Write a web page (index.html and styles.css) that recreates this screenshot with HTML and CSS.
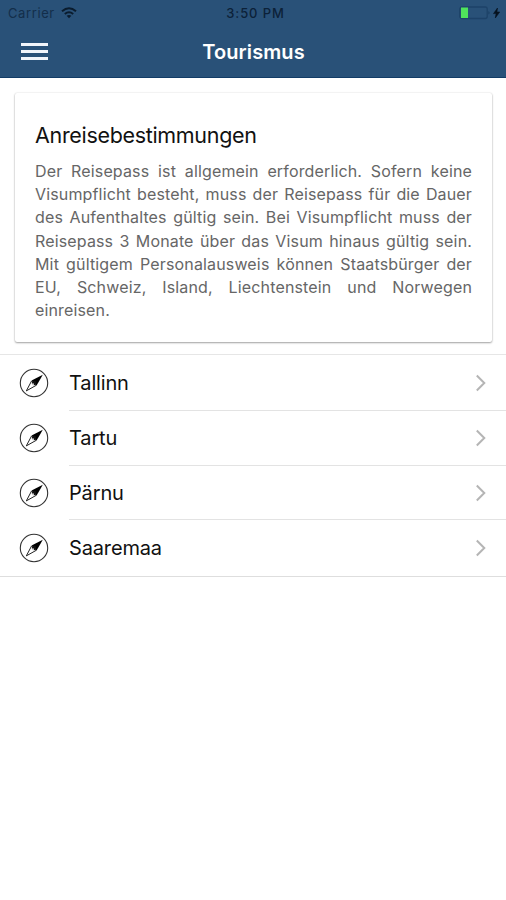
FILE: index.html
```html
<!DOCTYPE html>
<html lang="de">
<head>
<meta charset="utf-8">
<title>Tourismus</title>
<link rel="stylesheet" href="styles.css">
</head>
<body>
<svg class="defs" width="0" height="0" aria-hidden="true">
  <symbol id="compass" viewBox="0 0 30 30">
    <circle cx="15" cy="15" r="13.7" fill="none" stroke="#333" stroke-width="1.1"/>
    <path d="M23.8 6.8 17.6 17.4 12.6 12.4Z" fill="#000"/>
    <path d="M12.6 12.9 7.3 22.9 17.1 17.4Z" fill="#fff" stroke="#222" stroke-width="1"/>
    <circle cx="15" cy="15" r="2.2" fill="#111"/>
    <circle cx="14" cy="16.2" r="1" fill="#ddd"/>
  </symbol>
  <symbol id="chevron" viewBox="0 0 12 18">
    <path d="M1.8 1.5 9.3 9 1.8 16.5" fill="none" stroke="#b5b5b5" stroke-width="2"/>
  </symbol>
</svg>
<header class="header">
  <div class="status">
    <div class="carrier"><span>Carrier</span>
      <svg width="16" height="12" viewBox="0 0 16 12" fill="none" stroke="#0a1c2e" stroke-width="2"><path d="M1 4.2Q8-1.8 15 4.2M3.8 7Q8 3.5 12.2 7"/><path d="M5.6 8.8Q8 7 10.4 8.8L8 11.3Z" fill="#0a1c2e" stroke="none"/></svg>
    </div>
    <div class="time">3:50 PM</div>
    <svg class="battery" width="42" height="14" viewBox="0 0 42 14"><rect x=".8" y="1" width="27.4" height="11.5" rx="2" fill="none" stroke="#1d4268" stroke-width="1.3"/><rect x="2" y="1.5" width="7" height="10.5" fill="#4fe35c"/><path d="M29.5 5q2 1.8 0 3.6Z" fill="#173b5f"/><path d="M38.5 2 34.5 7.6h2.6L36.3 12l4.4-6h-2.8Z" fill="#06121f" stroke="#06121f" stroke-width=".6"/></svg>
  </div>
  <div class="nav">
    <div class="menu"><i></i><i></i><i></i></div>
    <h1>Tourismus</h1>
  </div>
</header>
<main>
  <section class="card">
    <h2>Anreisebestimmungen</h2>
    <p>
      <span>Der Reisepass ist allgemein erforderlich. Sofern keine</span>
      <span>Visumpflicht besteht, muss der Reisepass für die Dauer</span>
      <span>des Aufenthaltes gültig sein. Bei Visumpflicht muss der</span>
      <span>Reisepass 3 Monate über das Visum hinaus gültig sein.</span>
      <span>Mit gültigem Personalausweis können Staatsbürger der</span>
      <span>EU, Schweiz, Island, Liechtenstein und Norwegen</span>
      <span>einreisen.</span>
    </p>
  </section>
  <ul class="list">
    <li><svg class="icon"><use href="#compass"/></svg><div class="row"><span>Tallinn</span><svg class="chev"><use href="#chevron"/></svg></div></li>
    <li><svg class="icon"><use href="#compass"/></svg><div class="row"><span>Tartu</span><svg class="chev"><use href="#chevron"/></svg></div></li>
    <li><svg class="icon"><use href="#compass"/></svg><div class="row"><span>Pärnu</span><svg class="chev"><use href="#chevron"/></svg></div></li>
    <li><svg class="icon"><use href="#compass"/></svg><div class="row"><span>Saaremaa</span><svg class="chev"><use href="#chevron"/></svg></div></li>
  </ul>
</main>
</body>
</html>
```
FILE: styles.css
```css
* { box-sizing: border-box; }
body { margin: 0; min-height: 900px; background: #fff; font-family: Inter, "Liberation Sans", sans-serif; color: #111; }
svg { display: block; flex: none; }
.defs { position: absolute; }
.header { height: 78px; background: #295178; border-bottom: 1px solid #123c66; }
.status { height: 26px; padding: 0 5px 0 8px; display: grid; grid-template-columns: 1fr auto 1fr; align-items: center; font-size: 13px; color: #0c2138; }
.carrier { display: flex; align-items: center; gap: 6px; letter-spacing: .6px; color: #132e4a; }
.time { padding-left: 2px; font-weight: 500; letter-spacing: .9px; }
.battery { justify-self: end; }
.nav { height: 51px; padding: 0 21px; display: grid; grid-template-columns: 27px 1fr 27px; align-items: center; }
.menu { display: grid; gap: 4px; }
.menu i { height: 3px; background: #f1f5fb; }
h1 { margin: 0; padding-left: 1px; font-size: 20px; line-height: 24px; font-weight: 600; text-align: center; letter-spacing: .1px; color: #fff; }
.card { margin: 15px 14px 0 15px; height: 249px; padding: 28px 20px 0 20px; border-radius: 2px; box-shadow: 0 1px 2px rgba(0,0,0,.35), 0 0 2px rgba(0,0,0,.13); }
h2 { margin: 0; font-size: 21.5px; line-height: 28px; font-weight: 400; letter-spacing: -.32px; white-space: nowrap; }
p { margin: 11px 0 0; font-size: 16px; line-height: 23.2px; letter-spacing: .15px; color: #666; }
p span { display: block; white-space: nowrap; text-align: justify; text-align-last: justify; }
p span:last-child { text-align-last: left; }
.list { list-style: none; margin: 12px 0 0; padding: 0; border-top: 1px solid #e6e6e6; border-bottom: 1px solid #dedede; }
li { display: flex; align-items: center; height: 55px; padding-left: 19px; }
li:first-child, li:last-child { height: 56px; }
li:nth-child(2) .icon { margin-bottom: 1px; }
li:nth-child(3) { height: 54px; }
.icon { width: 30px; height: 30px; margin-right: 20px; }
.row { flex: 1; height: 100%; display: flex; align-items: center; justify-content: space-between; padding-right: 19px; border-bottom: 1px solid #e3e3e3; font-size: 20px; letter-spacing: -.15px; }
li:last-child .row { border-bottom: 0; }
.chev { width: 12px; height: 18px; }
```
